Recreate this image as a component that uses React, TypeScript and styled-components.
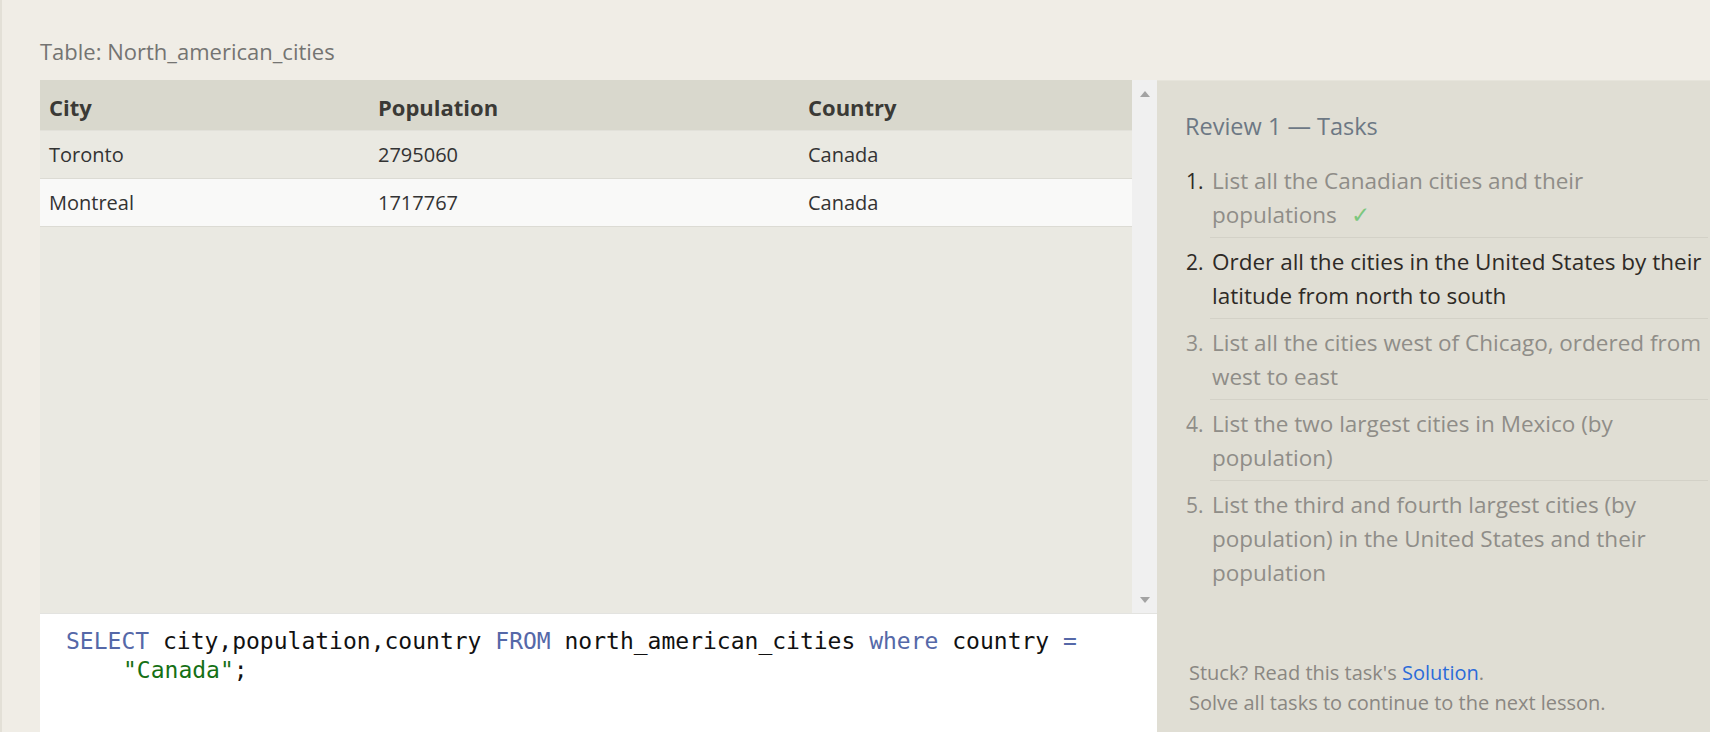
import styled, { createGlobalStyle } from 'styled-components';

const GlobalStyle = createGlobalStyle`
  html, body {
    margin: 0;
    padding: 0;
    background: #f0ede6;
  }
  body {
    font-family: 'Open Sans', 'Noto Sans', sans-serif;
    color: #333;
  }
`;

const Page = styled.div`
  width: 1710px;
  height: 732px;
  box-sizing: border-box;
  border-left: 2px solid #e3e0d7;
  display: flex;
  flex-direction: column;
  overflow: hidden;
`;

const TableCaption = styled.div`
  height: 80px;
  box-sizing: border-box;
  padding: 36px 0 0 38px;
  font-size: 22px;
  line-height: 30px;
  color: #747472;
`;

const Workspace = styled.div`
  flex: 1;
  display: flex;
  padding-left: 38px;
  min-height: 0;
`;

const LeftColumn = styled.div`
  width: 1117px;
  display: flex;
  flex-direction: column;
`;

const Results = styled.div`
  height: 533px;
  display: flex;
`;

const TableArea = styled.div`
  flex: 1;
  background: #eae9e2;
`;

const Table = styled.table`
  width: 100%;
  border-collapse: collapse;
  table-layout: fixed;
  font-size: 20px;
`;

const HeadCell = styled.th`
  height: 50px;
  padding: 4px 0 0 9px;
  box-sizing: border-box;
  text-align: left;
  font-weight: 700;
  font-size: 22px;
  color: #3b3a36;
  background: #d9d8cd;
  border-bottom: 1px solid #e2e1da;
`;

const Row = styled.tr<{ $alt?: boolean }>`
  background: ${(p) => (p.$alt ? '#f9f9f8' : '#eae9e2')};
  border-bottom: 1px solid #dcdbd4;
`;

const Cell = styled.td`
  height: 46px;
  padding: 1px 0 0 9px;
  color: #333;
`;

const Scrollbar = styled.div`
  width: 25px;
  background: #f0f0f0;
  display: flex;
  flex-direction: column;
  justify-content: space-between;
  align-items: center;
  padding: 11px 0 10px;
  box-sizing: border-box;
`;

const Arrow = styled.div<{ $down?: boolean }>`
  width: 0;
  height: 0;
  border-left: 5.5px solid transparent;
  border-right: 5.5px solid transparent;
  ${(p) =>
    p.$down ? 'border-top: 6px solid #a3a3a3;' : 'border-bottom: 6px solid #a3a3a3;'}
`;

const Editor = styled.div`
  flex: 1;
  background: #fff;
  border-top: 1px solid #e3e3e0;
  padding: 13px 0 0 26px;
  font-family: 'DejaVu Sans Mono', 'Liberation Mono', monospace;
  font-size: 23px;
  line-height: 29px;
  color: #111;
  white-space: pre;
`;

const CodeLine = styled.div<{ $indent?: boolean }>`
  padding-left: ${(p) => (p.$indent ? '57px' : '0')};
`;

const Keyword = styled.span`
  color: #5568a8;
`;

const Str = styled.span`
  color: #157015;
`;

const TaskPanel = styled.aside`
  flex: 1;
  background: #e0ded4;
  border-top: 1px solid #e6e4db;
  padding: 30px 2px 0 28px;
  display: flex;
  flex-direction: column;
`;

const TaskTitle = styled.h2`
  margin: 0;
  font-weight: 400;
  font-size: 23.5px;
  line-height: 30px;
  color: #6d7884;
`;

const TaskList = styled.ol`
  list-style: none;
  margin: 16px 0 0;
  padding: 0;
`;

type TaskState = 'done' | 'current' | 'todo';

const TaskItem = styled.li`
  display: flex;
  font-size: 22.5px;
  line-height: 34px;
`;

const TaskNum = styled.span<{ $state: TaskState }>`
  width: 24px;
  padding: 7px 0 0 1px;
  font-size: 21px;
  color: ${(p) => (p.$state === 'todo' ? '#8f8d88' : '#2e2a26')};
`;

const TaskText = styled.div<{ $state: TaskState; $last?: boolean }>`
  flex: 1;
  padding: 7px 0 5px 2px;
  border-bottom: ${(p) => (p.$last ? 'none' : '1px solid #d3d1c7')};
  color: ${(p) => (p.$state === 'current' ? '#2e2a26' : '#8f8d88')};
`;

const DoneTail = styled.span`
  white-space: nowrap;
`;

const Check = styled.span`
  margin-left: 14px;
  color: #7cc77e;
`;

const Footer = styled.div`
  margin-top: auto;
  padding: 0 0 14px 4px;
  font-size: 20px;
  line-height: 30px;
  color: #8a8782;
`;

const SolutionLink = styled.a`
  color: #2b6bd9;
  text-decoration: none;
`;

const rows = [
  { city: 'Toronto', population: 2795060, country: 'Canada' },
  { city: 'Montreal', population: 1717767, country: 'Canada' },
];

const tasks: { text: string; state: TaskState }[] = [
  { text: 'List all the Canadian cities and their populations', state: 'done' },
  { text: 'Order all the cities in the United States by their latitude from north to south', state: 'current' },
  { text: 'List all the cities west of Chicago, ordered from west to east', state: 'todo' },
  { text: 'List the two largest cities in Mexico (by population)', state: 'todo' },
  { text: 'List the third and fourth largest cities (by population) in the United States and their population', state: 'todo' },
];

function TaskBody({ text, done }: { text: string; done: boolean }) {
  if (!done) return <>{text}</>;
  // keep the last word together with the check mark
  const cut = text.lastIndexOf(' ');
  return (
    <>
      {text.slice(0, cut + 1)}
      <DoneTail>
        {text.slice(cut + 1)}
        <Check>✓</Check>
      </DoneTail>
    </>
  );
}

export default function App() {
  return (
    <>
      <GlobalStyle />
      <Page>
        <TableCaption>Table: North_american_cities</TableCaption>
        <Workspace>
          <LeftColumn>
            <Results>
              <TableArea>
                <Table>
                  <colgroup>
                    <col style={{ width: 329 }} />
                    <col style={{ width: 430 }} />
                    <col />
                  </colgroup>
                  <thead>
                    <tr>
                      <HeadCell>City</HeadCell>
                      <HeadCell>Population</HeadCell>
                      <HeadCell>Country</HeadCell>
                    </tr>
                  </thead>
                  <tbody>
                    {rows.map((r, i) => (
                      <Row key={r.city} $alt={i % 2 === 1}>
                        <Cell>{r.city}</Cell>
                        <Cell>{r.population}</Cell>
                        <Cell>{r.country}</Cell>
                      </Row>
                    ))}
                  </tbody>
                </Table>
              </TableArea>
              <Scrollbar>
                <Arrow />
                <Arrow $down />
              </Scrollbar>
            </Results>
            <Editor>
              <CodeLine>
                <Keyword>SELECT</Keyword> city,population,country <Keyword>FROM</Keyword> north_american_cities{' '}
                <Keyword>where</Keyword> country <Keyword>=</Keyword>
              </CodeLine>
              <CodeLine $indent>
                <Str>"Canada"</Str>;
              </CodeLine>
            </Editor>
          </LeftColumn>
          <TaskPanel>
            <TaskTitle>Review 1 — Tasks</TaskTitle>
            <TaskList>
              {tasks.map((t, i) => (
                <TaskItem key={i}>
                  <TaskNum $state={t.state}>{i + 1}.</TaskNum>
                  <TaskText $state={t.state} $last={i === tasks.length - 1}>
                    <TaskBody text={t.text} done={t.state === 'done'} />
                  </TaskText>
                </TaskItem>
              ))}
            </TaskList>
            <Footer>
              Stuck? Read this task's <SolutionLink href="#">Solution</SolutionLink>.
              <br />
              Solve all tasks to continue to the next lesson.
            </Footer>
          </TaskPanel>
        </Workspace>
      </Page>
    </>
  );
}
